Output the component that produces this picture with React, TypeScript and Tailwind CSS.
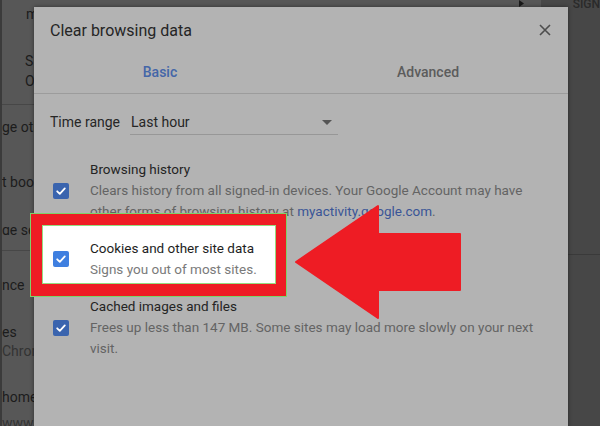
import React from 'react';

function Check({ bright }: { bright?: boolean }) {
  return (
    <div
      className={
        'w-[16px] h-[16px] rounded-[2px] shrink-0 flex items-center justify-center ' +
        (bright ? 'bg-[#3f7fe0]' : 'bg-[#3a64ae]')
      }
    >
      <svg width="12" height="12" viewBox="0 0 12 12">
        <path d="M2.2 6.3 L4.8 8.8 L9.8 3.4" fill="none" stroke="#fff" strokeWidth="1.8" strokeLinecap="round" strokeLinejoin="round" />
      </svg>
    </div>
  );
}

export default function App() {
  return (
    <div className="relative w-[600px] h-[426px] overflow-hidden bg-[#474747] font-['Roboto',sans-serif]">
      {/* page underneath the dialog */}
      <div className="flex h-full">
        <div className="w-[2px] bg-[#3b3b3b]" />
        <div className="w-[540px] bg-[#575757] flex flex-col text-[14px] leading-[20px] text-[#1c1c1c] whitespace-nowrap">
          <div className="w-[32px] overflow-hidden flex flex-col">
            <div className="mt-[4px] pl-[24px]">m</div>
            <div className="mt-[27px] pl-[23px]">S</div>
            <div className="pl-[23px]">O</div>
          </div>
          <div className="mt-[16px] border-b border-[#474747]" />
          <div className="w-[32px] overflow-hidden flex flex-col">
            <div className="mt-[12px]">ge other people</div>
            <div className="mt-[35px]">t bookmarks</div>
            <div className="mt-[28px]">ge search engines</div>
          </div>
          <div className="mt-[15px] border-b border-[#474747]" />
          <div className="w-[32px] overflow-hidden flex flex-col">
            <div className="mt-[24px]">nce</div>
            <div className="mt-[28px] leading-[18px]">es</div>
            <div className="mt-[1px] leading-[18px] text-[#333]">Chrome Web Store</div>
            <div className="mt-[27px]">home button</div>
            <div className="mt-[6px] text-[#333]">www.google.com</div>
          </div>
        </div>
        <div className="flex-1 flex flex-col">
          <div className="-mt-[3px] pl-[32px] text-[12px] leading-[14px] font-medium text-[#2a2a2a]">SIGN</div>
          <div className="mt-[243px] border-b border-[#3a3a3a]" />
        </div>
      </div>

      <svg className="absolute left-[518px] top-0" width="7" height="8" viewBox="0 0 7 8">
        <path d="M1 0 L6 3.5 L1 7 Z" fill="#1a1a1a" />
      </svg>

      {/* dialog */}
      <div className="absolute left-[34px] top-[7px] w-[534px] h-[440px] bg-[#b3b3b3] shadow-[0_0_4px_rgba(0,0,0,0.45)]">
        <div className="flex items-start justify-between pl-[16px] pr-[17px] pt-[14px]">
          <div className="text-[16px] leading-[20px] text-[#252525]">Clear browsing data</div>
          <svg className="mt-[3px]" width="12" height="12" viewBox="0 0 12 12">
            <path d="M1 1 L11 11 M11 1 L1 11" stroke="#4d4d4d" strokeWidth="1.6" />
          </svg>
        </div>

        <div className="border-b border-[#9c9c9c]">
          <div className="flex -ml-[8px] mr-[6px] pt-[21px] pb-[11px] text-[14px] leading-[20px] font-medium">
            <div className="flex-1 text-center text-[#4466a8]">Basic</div>
            <div className="flex-1 text-center text-[#5c5c5c]">Advanced</div>
          </div>
        </div>

        <div className="flex items-start mt-[18px] pl-[16px] text-[14px] leading-[20px] text-[#262626]">
          <div className="w-[80px]">Time range</div>
          <div className="w-[208px] flex items-center justify-between border-b border-[#979797] pb-[2px] pl-[1px] pr-[6px]">
            <span>Last hour</span>
            <svg width="10" height="5" viewBox="0 0 10 5">
              <path d="M0 0 L10 0 L5 5 Z" fill="#555" />
            </svg>
          </div>
        </div>

        <div className="mt-[16px] flex flex-col text-[13.5px] leading-[21px] whitespace-nowrap">
          <div className="flex items-center py-[8px] pl-[19px]">
            <Check />
            <div className="ml-[21px]">
              <div className="text-[#242424]">Browsing history</div>
              <div className="text-[#646464]">Clears history from all signed-in devices. Your Google Account may have</div>
              <div className="text-[#646464]">
                other forms of browsing history at <span className="text-[#3a5597]">myactivity.google.com</span>.
              </div>
            </div>
          </div>

          <div className="relative py-[8px] pl-[19px]">
            <div className="absolute -left-[4px] -top-[17px] w-[257px] h-[84px] flex bg-[#ee1c24] border border-[#7dd36b] pt-[11px] pl-[11px] pr-[10px] pb-[12px]">
              <div className="flex-1 bg-white border border-[#94dd80]" />
            </div>
            <div className="relative flex items-center">
              <Check bright />
              <div className="ml-[21px]">
                <div className="text-[#1e1e1e]">Cookies and other site data</div>
                <div className="text-[#7a7a7a]">Signs you out of most sites.</div>
              </div>
            </div>
          </div>

          <div className="flex items-center py-[8px] pl-[19px]">
            <Check />
            <div className="ml-[21px]">
              <div className="text-[#242424]">Cached images and files</div>
              <div className="text-[#646464]">Frees up less than 147 MB. Some sites may load more slowly on your next</div>
              <div className="text-[#646464]">visit.</div>
            </div>
          </div>
        </div>
      </div>

      {/* red arrow annotation */}
      <svg className="absolute left-0 top-0 pointer-events-none" width="600" height="426" viewBox="0 0 600 426">
        <polygon
          points="296,262 378,206 378,234 460,234 460,290 378,290 378,318"
          fill="#ee1c24"
          stroke="#ee1c24"
          strokeWidth="2"
          strokeLinejoin="round"
        />
      </svg>
    </div>
  );
}
